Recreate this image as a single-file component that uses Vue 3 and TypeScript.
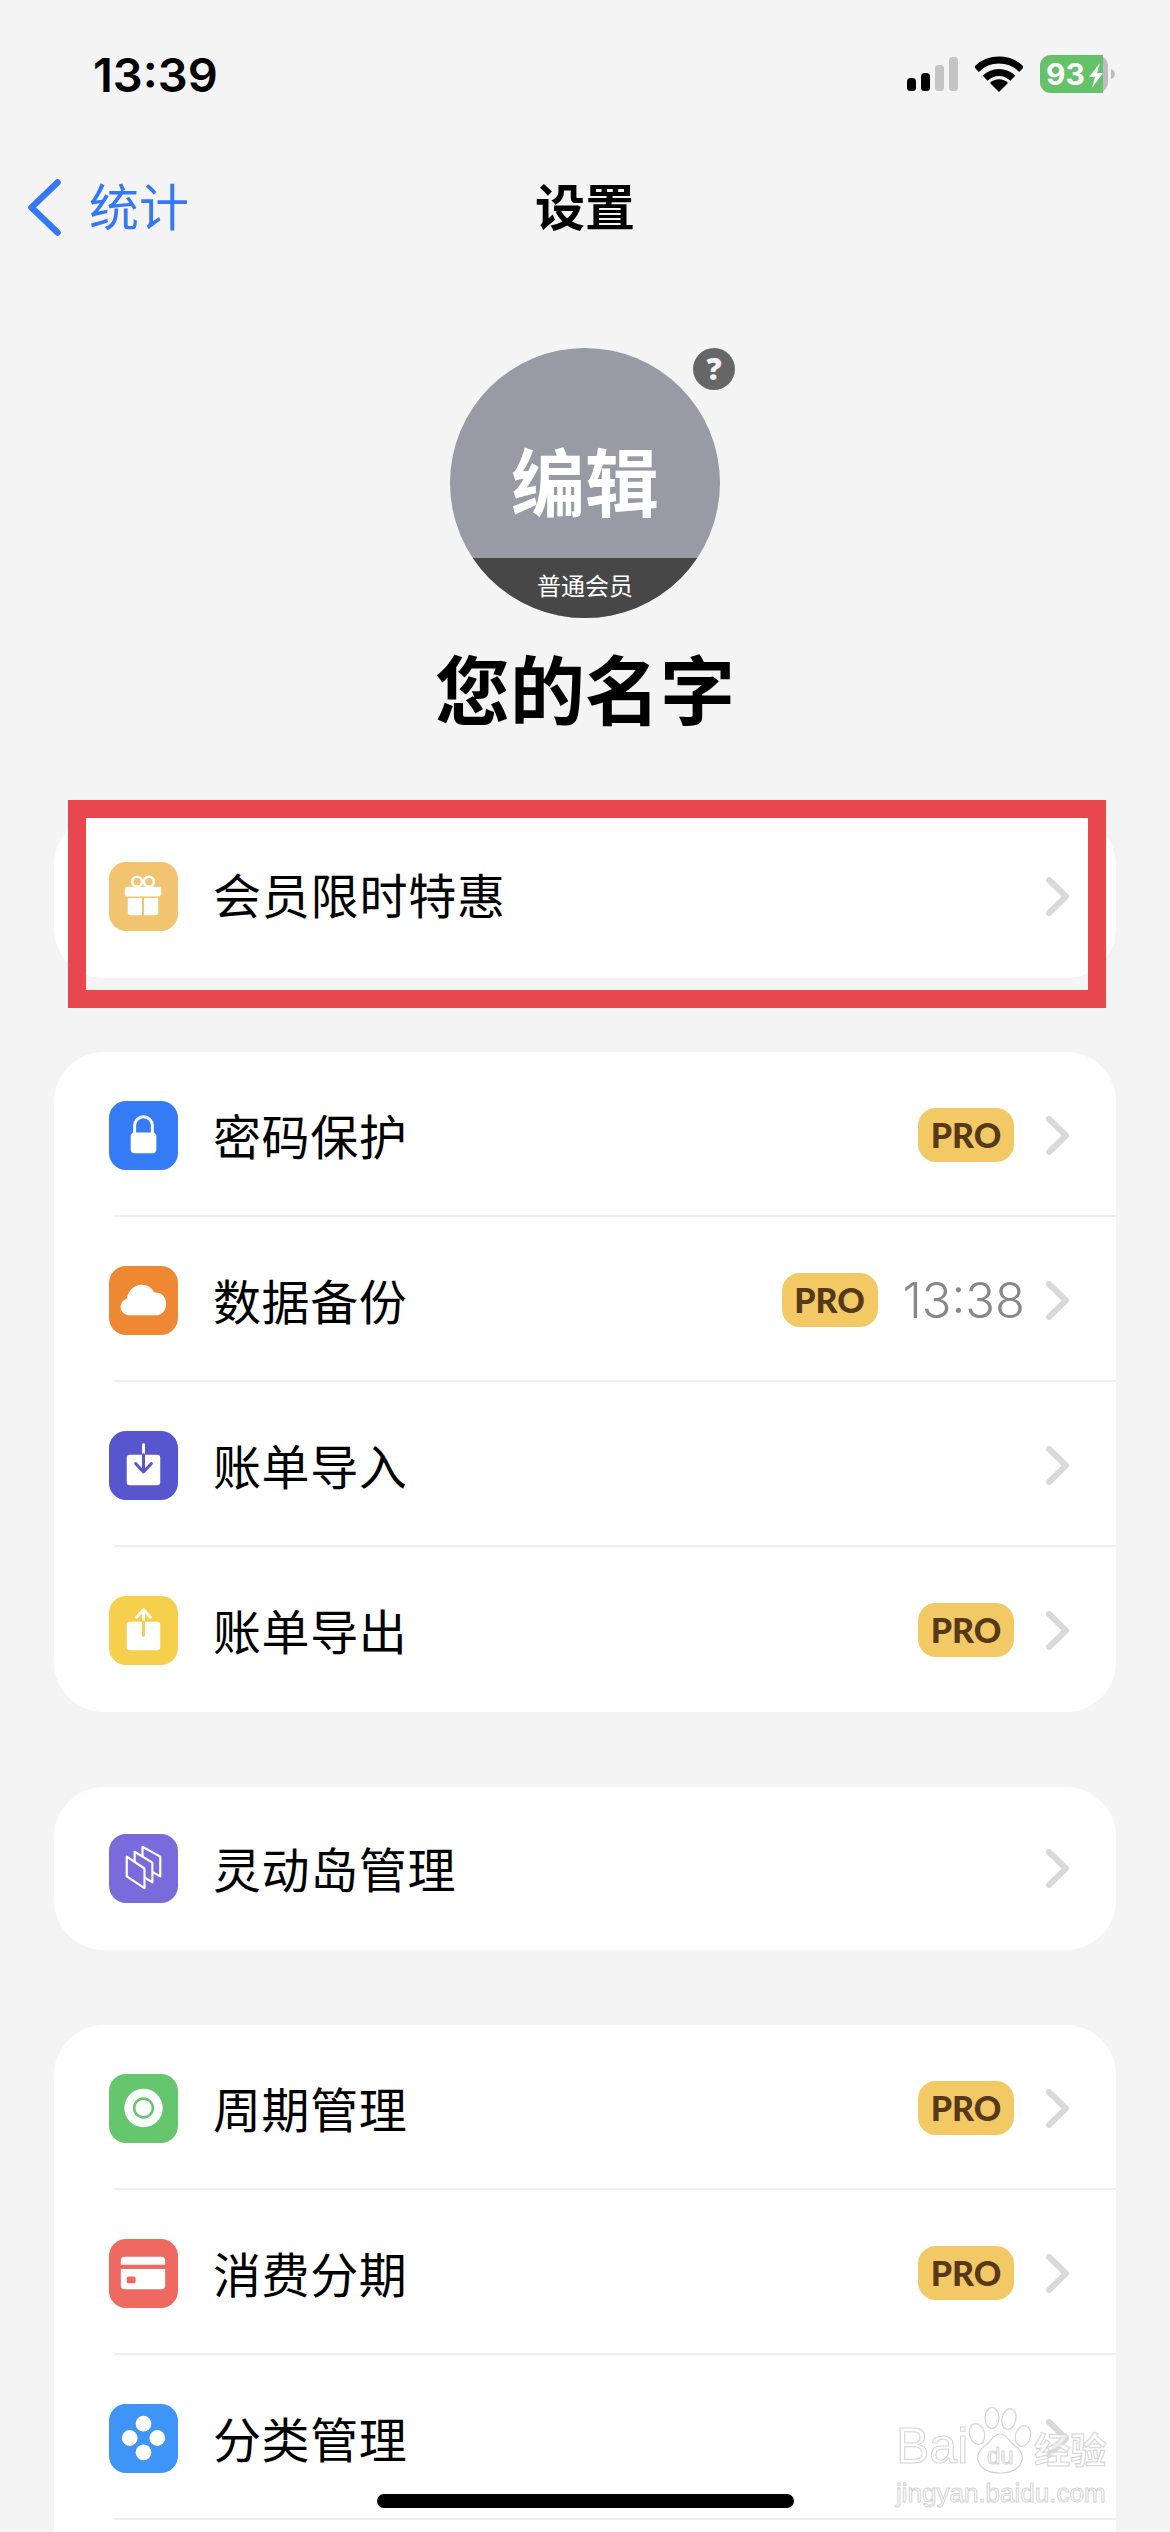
<script setup lang="ts">
type Item = { label: string; icon: string; color: string; pro?: boolean; time?: string }

const promo: Item = { label: '会员限时特惠', icon: 'gift', color: '#f2c46f' }

const groups: Item[][] = [
  [
    { label: '密码保护', icon: 'lock', color: '#367bf6', pro: true },
    { label: '数据备份', icon: 'cloud', color: '#ef8833', pro: true, time: '13:38' },
    { label: '账单导入', icon: 'import', color: '#5856ce' },
    { label: '账单导出', icon: 'export', color: '#f6d04d', pro: true },
  ],
  [{ label: '灵动岛管理', icon: 'layers', color: '#7a6bdc' }],
  [
    { label: '周期管理', icon: 'cycle', color: '#66c66d', pro: true },
    { label: '消费分期', icon: 'card', color: '#ee6a61', pro: true },
    { label: '分类管理', icon: 'dots', color: '#3f94f7' },
  ],
]
</script>

<template>
  <div class="page">
    <header class="status">
      <span class="clock">13:39</span>
      <div class="status-icons">
        <svg width="51" height="34" viewBox="0 0 51 34" aria-hidden="true">
          <rect x="0" y="21" width="9" height="13" rx="3.5" fill="#000" />
          <rect x="14" y="16" width="9" height="18" rx="3.5" fill="#000" />
          <rect x="28" y="8" width="9" height="26" rx="3.5" fill="#c4c4c4" />
          <rect x="42" y="0" width="9" height="34" rx="3.5" fill="#c4c4c4" />
        </svg>
        <svg width="48" height="36" viewBox="0 0 48 36" aria-hidden="true">
          <path d="M1.4 13.4a32 32 0 0 1 45.2 0" fill="none" stroke="#000" stroke-width="7" />
          <path d="M10.2 22.2a19.5 19.5 0 0 1 27.6 0" fill="none" stroke="#000" stroke-width="7" />
          <path d="M24 36l-9-9a12.7 12.7 0 0 1 18 0z" fill="#000" />
        </svg>
        <svg width="75" height="38" viewBox="0 0 75 38" aria-hidden="true">
          <rect x="0" y="0" width="68" height="38" rx="11" fill="#bdbdbd" />
          <path d="M11 0h52v38H11A11 11 0 0 1 0 27V11A11 11 0 0 1 11 0z" fill="#66c26a" />
          <path d="M71 14a6 6 0 0 1 4 5 6 6 0 0 1-4 5z" fill="#bdbdbd" />
          <text x="6" y="30" class="battery-text">93</text>
          <path d="M60 8L49 22h6l-3 11 11-15h-6z" fill="#fff" />
        </svg>
      </div>
    </header>

    <nav class="nav">
      <div class="back">
        <svg width="33" height="57" viewBox="0 0 33 57" aria-hidden="true">
          <path d="M29.500 3.500L3.500 28.500l26 25" fill="none" stroke="#3478f6" stroke-width="6.500" stroke-linecap="round" stroke-linejoin="round" />
        </svg>
        <span>统计</span>
      </div>
      <h1 class="title">设置</h1>
      <div></div>
    </nav>

    <section class="profile">
      <div class="avatar-wrap">
        <div class="avatar">
          <span class="avatar-edit">编辑</span>
          <span class="avatar-level">普通会员</span>
        </div>
        <span class="help">?</span>
      </div>
      <h2 class="name">您的名字</h2>
    </section>

    <div class="promo-wrap">
      <div class="card card--single">
        <div class="row">
          <span class="app-icon" :style="{ background: promo.color }">
            <svg width="69" height="69" viewBox="0 0 70 70" aria-hidden="true">
              <circle cx="28.500" cy="20" r="5" fill="none" stroke="#fff" stroke-width="2.600" />
              <circle cx="40.500" cy="20" r="5" fill="none" stroke="#fff" stroke-width="2.600" />
              <rect x="16" y="25" width="37" height="10" rx="2.500" fill="#fff" />
              <path d="M19 36.500h14.500V54H22a3 3 0 0 1-3-3zM35.500 36.500H50V51a3 3 0 0 1-3 3H35.500z" fill="#fff" />
            </svg>
          </span>
          <span class="label">{{ promo.label }}</span>
          <div class="trail">
            <svg class="chevron" width="23" height="39" viewBox="0 0 23 39" aria-hidden="true">
              <path d="M3 3l17 16.500L3 36" fill="none" stroke="#d9d9d9" stroke-width="6" stroke-linecap="round" stroke-linejoin="round" />
            </svg>
          </div>
        </div>
      </div>
      <div class="highlight"></div>
    </div>

    <div v-for="(group, g) in groups" :key="g" class="card" :class="{ 'card--single': group.length === 1 }">
      <template v-for="(item, i) in group" :key="item.label">
        <div v-if="i > 0" class="sep"></div>
        <div class="row">
          <span class="app-icon" :style="{ background: item.color }">
            <svg width="69" height="69" viewBox="0 0 70 70" aria-hidden="true">
              <g v-if="item.icon === 'lock'">
                <path d="M26 33V25a9 9 0 0 1 18 0v8" fill="none" stroke="#fff" stroke-width="3" />
                <rect x="22" y="32" width="26" height="21" rx="4" fill="#fff" />
              </g>
              <path
                v-else-if="item.icon === 'cloud'"
                d="M20 50a8.500 8.500 0 0 1-2-16.700C19 26 25 19 33 19c6 0 10.500 3 13 8 7-.5 12 4.500 12 11.500S53 50 48 50z"
                fill="#fff"
              />
              <g v-else-if="item.icon === 'import'">
                <rect x="18" y="24" width="34" height="31" rx="3" fill="#fff" />
                <path d="M35 14v10" stroke="#fff" stroke-width="3" stroke-linecap="round" />
                <path d="M35 24v17M27 33l8 8.500 8-8.500" fill="none" :stroke="item.color" stroke-width="3" stroke-linecap="round" stroke-linejoin="round" />
              </g>
              <g v-else-if="item.icon === 'export'">
                <rect x="18" y="26" width="34" height="29" rx="3" fill="#fff" />
                <path d="M35 26V14M28 21.500L35 14l7 7.500" fill="none" stroke="#fff" stroke-width="3" stroke-linecap="round" stroke-linejoin="round" />
                <path d="M35 26v14" :stroke="item.color" stroke-width="3" stroke-linecap="round" />
              </g>
              <g v-else-if="item.icon === 'layers'" :fill="item.color" stroke="#fff" stroke-width="2.200" stroke-linejoin="round">
                <path d="M34 13l18 10v20l-18-10z" />
                <path d="M26 18l18 11v20l-18-11z" />
                <path d="M18 23l18 12v20L18 43z" />
              </g>
              <g v-else-if="item.icon === 'cycle'">
                <circle cx="35" cy="34.500" r="19.500" fill="#fff" />
                <circle cx="35" cy="34.500" r="9.500" fill="none" :stroke="item.color" stroke-width="2.600" />
              </g>
              <g v-else-if="item.icon === 'card'">
                <path d="M12 26v-4a4 4 0 0 1 4-4h37a4 4 0 0 1 4 4v4z" fill="#fff" />
                <path d="M12 30.500h45V47a4 4 0 0 1-4 4H16a4 4 0 0 1-4-4z" fill="#fff" />
                <rect x="18" y="38" width="9" height="7" rx="2" :fill="item.color" />
              </g>
              <g v-else fill="#fff">
                <circle cx="35" cy="20" r="8" />
                <circle cx="21" cy="34.500" r="8" />
                <circle cx="49" cy="34.500" r="8" />
                <circle cx="35" cy="49" r="8" />
              </g>
            </svg>
          </span>
          <span class="label">{{ item.label }}</span>
          <div class="trail">
            <span v-if="item.pro" class="pro">PRO</span>
            <span v-if="item.time" class="time">{{ item.time }}</span>
            <svg class="chevron" width="23" height="39" viewBox="0 0 23 39" aria-hidden="true">
              <path d="M3 3l17 16.500L3 36" fill="none" stroke="#d9d9d9" stroke-width="6" stroke-linecap="round" stroke-linejoin="round" />
            </svg>
          </div>
        </div>
      </template>
      <template v-if="g === groups.length - 1">
        <div class="sep"></div>
        <div class="row"></div>
      </template>
    </div>

    <div class="home-bar"></div>

    <div class="watermark" aria-hidden="true">
      <div class="wm-top">
        <span class="wm-bai">Bai</span>
        <span class="wm-paw">
          <svg width="64" height="67" viewBox="0 0 64 67">
            <g fill="none" stroke="#d4d4d4" stroke-width="1.200">
              <ellipse cx="9" cy="27" rx="7.500" ry="10.500" transform="rotate(-15 9 27)" />
              <ellipse cx="24" cy="11" rx="7" ry="10.500" />
              <ellipse cx="41" cy="12" rx="7" ry="10.500" transform="rotate(12 41 12)" />
              <ellipse cx="55" cy="29" rx="7.500" ry="10.500" transform="rotate(15 55 29)" />
              <path d="M32 27c-7 0-9 7-14 11-6 4-9 9-8 15 2 9 11 13 22 13s20-4 22-13c1-6-2-11-8-15-5-4-7-11-14-11z" />
            </g>
          </svg>
          <span class="wm-du">du</span>
        </span>
        <span class="wm-cn">经验</span>
      </div>
      <div class="wm-url">jingyan.baidu.com</div>
    </div>
  </div>
</template>

<style scoped>
.page {
  position: relative;
  width: 1170px;
  height: 2532px;
  overflow: hidden;
  background: #f4f4f4;
  color: #000;
  font-family: "Noto Sans CJK SC", "Noto Sans", sans-serif;
}

.status {
  display: flex;
  align-items: center;
  justify-content: space-between;
  height: 148px;
  padding: 0 55px 0 93px;
  box-sizing: border-box;
}

.clock {
  font-family: Inter, "Liberation Sans", sans-serif;
  font-size: 47px;
  font-weight: 600;
  line-height: 1;
}

.status-icons {
  display: flex;
  align-items: center;
  gap: 17px;
}

.battery-text {
  font-family: Inter, "Liberation Sans", sans-serif;
  font-size: 30px;
  font-weight: 700;
  fill: #fff;
}

.nav {
  display: grid;
  grid-template-columns: 1fr auto 1fr;
  align-items: center;
  height: 118px;
  padding-bottom: 6px;
  box-sizing: border-box;
}

.back {
  display: flex;
  align-items: center;
  gap: 28px;
  padding-left: 28px;
  color: #3478f6;
  font-size: 50px;
  line-height: 1;
}

.back svg {
  margin-bottom: -6px;
}

.title {
  margin: 0;
  font-size: 50px;
  font-weight: 700;
  line-height: 1;
}

.profile {
  display: flex;
  flex-direction: column;
  align-items: center;
  padding-top: 82px;
}

.avatar-wrap {
  position: relative;
  width: 270px;
  height: 270px;
}

.avatar {
  position: relative;
  width: 270px;
  height: 270px;
  border-radius: 50%;
  overflow: hidden;
  background: #989ba5;
  color: #fff;
  display: flex;
  flex-direction: column;
}

.avatar-edit {
  height: 210px;
  padding-top: 50px;
  box-sizing: border-box;
  display: flex;
  align-items: center;
  justify-content: center;
  font-size: 74px;
  font-weight: 700;
}

.avatar-level {
  flex: 1;
  display: flex;
  align-items: center;
  justify-content: center;
  padding-bottom: 6px;
  background: #474747;
  font-size: 24px;
  line-height: 1;
}

.help {
  position: absolute;
  top: 0;
  right: -15px;
  width: 42px;
  height: 42px;
  border-radius: 50%;
  background: #666;
  color: #f4f4f4;
  display: flex;
  align-items: center;
  justify-content: center;
  font-family: "Open Sans", sans-serif;
  font-size: 30px;
  font-weight: 800;
  line-height: 1;
}

.name {
  margin: 25px 0 0;
  font-size: 75px;
  font-weight: 700;
  line-height: 88px;
}

.promo-wrap {
  position: relative;
  margin-top: 84px;
  margin-bottom: -1px;
}

.card {
  margin: 0 54px 75px;
  padding-bottom: 2px;
  background: #fff;
  border-radius: 50px;
}

.card--single {
  padding-bottom: 0;
}

.row {
  display: flex;
  align-items: center;
  height: 163px;
  padding: 3px 47px 0 55px;
  box-sizing: border-box;
}

.card--single .row {
  padding-top: 0;
}

.sep {
  height: 2px;
  margin-left: 60px;
  background: #eeeeee;
}

.app-icon {
  flex: none;
  width: 69px;
  height: 69px;
  border-radius: 17px;
  overflow: hidden;
}

.app-icon svg {
  display: block;
}

.label {
  margin-left: 35px;
  padding-bottom: 3px;
  font-size: 48px;
  line-height: 1;
  letter-spacing: 0.6px;
}

.promo-wrap .label {
  padding-bottom: 8px;
  letter-spacing: 0.8px;
}

.trail {
  display: flex;
  align-items: center;
  gap: 24px;
  margin-left: auto;
}

.pro {
  width: 96px;
  height: 54px;
  margin-right: 8px;
  border-radius: 18px;
  background: #f2c964;
  color: #55391a;
  display: flex;
  align-items: center;
  justify-content: center;
  font-family: Lato, "Open Sans", sans-serif;
  font-size: 34px;
  font-weight: 900;
  line-height: 1;
}

.time {
  margin-left: -7px;
  margin-right: -3px;
  color: #888;
  font-family: Inter, "Liberation Sans", sans-serif;
  font-size: 49px;
  font-weight: 300;
  line-height: 1;
}

.chevron {
  display: block;
}

/* red annotation drawn on top of the screenshot */
.highlight {
  position: absolute;
  top: -15px;
  left: 68px;
  width: 1038px;
  height: 208px;
  box-sizing: border-box;
  border: 18px solid #e9474f;
  pointer-events: none;
}

.home-bar {
  position: absolute;
  left: 377px;
  bottom: 24px;
  width: 417px;
  height: 14px;
  border-radius: 7px;
  background: #000;
}

.watermark {
  position: absolute;
  left: 896px;
  top: 2407px;
  width: 212px;
  font-family: "Liberation Sans", "Noto Sans CJK SC", sans-serif;
  color: rgba(255, 255, 255, 0.55);
  -webkit-text-stroke: 1px #d4d4d4;
}

.wm-top {
  display: flex;
  align-items: flex-end;
  height: 67px;
}

.wm-bai {
  font-size: 50px;
  line-height: 58px;
  height: 58px;
  margin-bottom: -1px;
}

.wm-paw {
  position: relative;
  display: block;
  width: 64px;
  height: 67px;
  flex: none;
}

.wm-paw svg {
  display: block;
}

.wm-du {
  position: absolute;
  left: 0;
  right: 0;
  top: 36px;
  text-align: center;
  font-size: 24px;
  line-height: 26px;
}

.wm-cn {
  margin-left: 2px;
  font-size: 36px;
  line-height: 44px;
  font-weight: 700;
}

.wm-url {
  margin-top: 4px;
  font-size: 26px;
  line-height: 30px;
  white-space: nowrap;
}
</style>

<style>
html,
body {
  margin: 0;
  background: #f4f4f4;
}
</style>
